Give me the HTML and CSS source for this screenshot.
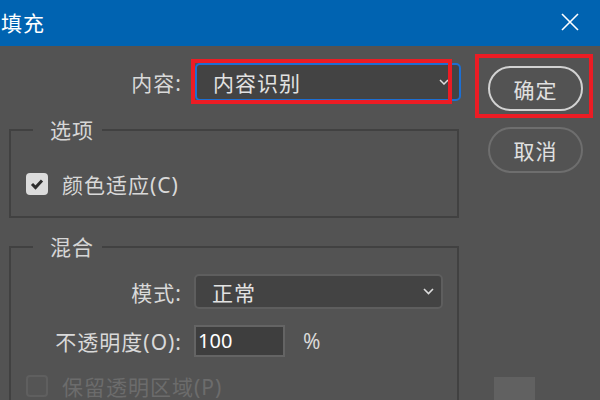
FILE: index.html
```html
<!DOCTYPE html>
<html lang="zh-CN">
<head>
    <meta charset="UTF-8">
    <title>填充</title>
    <link rel="stylesheet" href="styles.css">
</head>
<body>
    <header class="titlebar">
        <h1>填充</h1>
        <svg class="close" width="18" height="18" viewBox="0 0 18 18">
            <path d="M1 1 L17 17 M17 1 L1 17" stroke="#fff" stroke-width="1.6" fill="none"/>
        </svg>
    </header>

    <div class="dialog">
        <div class="left">
            <div class="row top-row">
                <span class="label">内容:</span>
                <div class="select select-active">
                    <span>内容识别</span>
                    <svg class="chevron" width="10" height="6" viewBox="0 0 10 6">
                        <path d="M1 1 L5 5 L9 1" stroke="#ddd" stroke-width="1.5" fill="none"/>
                    </svg>
                    <div class="mark"></div>
                </div>
            </div>

            <fieldset class="group">
                <legend>选项</legend>
                <label class="check-row">
                    <span class="checkbox">
                        <svg width="14" height="12" viewBox="0 0 14 12">
                            <path d="M2 6 L5.5 9.5 L12 2.5" stroke="#2e2e2e" stroke-width="3" fill="none"/>
                        </svg>
                    </span>
                    颜色适应(C)
                </label>
            </fieldset>

            <fieldset class="group blend">
                <legend>混合</legend>
                <div class="row">
                    <span class="label">模式:</span>
                    <div class="select select-mode">
                        <span>正常</span>
                        <svg class="chevron" width="11" height="7" viewBox="0 0 11 7">
                            <path d="M1 1 L5.5 5.5 L10 1" stroke="#ddd" stroke-width="1.6" fill="none"/>
                        </svg>
                    </div>
                </div>
                <div class="row opacity-row">
                    <span class="label">不透明度(O):</span>
                    <div class="input">100</div>
                    <span class="unit">%</span>
                </div>
                <label class="check-row disabled">
                    <span class="checkbox off"></span>
                    保留透明区域(P)
                </label>
            </fieldset>
        </div>

        <div class="right">
            <button class="btn btn-ok">确定<span class="mark"></span></button>
            <button class="btn btn-cancel">取消</button>
            <div class="swatch"></div>
        </div>
    </div>
</body>
</html>
```

FILE: styles.css
```css
body {
    margin: 0;
    padding: 0;
    background-color: #535353;
    font-family: "Noto Sans", "Noto Sans CJK SC", sans-serif;
    font-size: 21px;
    letter-spacing: 1px;
    color: #d9d9d9;
    overflow: hidden;
}

.titlebar {
    height: 46px;
    background-color: #0063b1;
    display: flex;
    align-items: center;
    justify-content: space-between;
    padding: 0 21px 0 1px;
}
.titlebar h1 {
    margin: 0 0 3px 0;
    font-size: 21px;
    font-weight: normal;
    color: #fff;
}
.close {
    margin-bottom: 3px;
}

.dialog {
    display: flex;
    gap: 27px;
    padding-left: 9px;
}
.left {
    width: 452px;
}
.right {
    width: 95px;
    padding-top: 20px;
    display: flex;
    flex-direction: column;
}

.row {
    display: flex;
    align-items: center;
}
.top-row {
    margin-top: 17px;
}
.top-row .label {
    width: 173px;
    margin-right: 13px;
}
.label {
    text-align: right;
    white-space: nowrap;
}

.select {
    position: relative;
    box-sizing: border-box;
    display: flex;
    align-items: center;
    background-color: #434343;
    border-radius: 5px;
    padding-left: 16px;
}
.select span {
    flex: 1;
    color: #e2e2e2;
}
.select-active {
    width: 266px;
    height: 38px;
    border: 2px solid #1c6fd3;
}
.select-active .chevron {
    margin-right: 10px;
}
.select-mode {
    width: 249px;
    height: 35px;
    border: 2px solid #5e5e5e;
}
.select-mode .chevron {
    margin-right: 7px;
}

.mark {
    position: absolute;
    box-sizing: border-box;
    border: 4px solid #ec1c24;
}
.select .mark {
    left: -6px;
    top: -6px;
    width: 261px;
    height: 45px;
}

.group {
    margin: 15px 0 0 0;
    padding: 26px 0 18px 15px;
    width: 450px;
    box-sizing: border-box;
    border: 2px solid #414141;
    min-width: 0;
}
.group legend {
    margin-left: 7px;
    padding: 0 8px 0 17px;
    line-height: 28px;
    color: #d6d6d6;
}
.blend {
    padding-top: 13px;
    border-bottom: none;
}
.blend .label {
    width: 156px;
    margin-right: 12px;
}

.check-row {
    display: flex;
    align-items: center;
    height: 28px;
    gap: 14px;
}
.checkbox {
    width: 22px;
    height: 22px;
    border-radius: 4px;
    background-color: #dcdcdc;
    display: flex;
    align-items: center;
    justify-content: center;
}
.checkbox.off {
    box-sizing: border-box;
    background-color: #555;
    border: 2px solid #5f5f5f;
}
.disabled {
    color: #6c6c6c;
    margin-top: 15px;
}

.opacity-row {
    margin-top: 16px;
}
.input {
    box-sizing: border-box;
    width: 91px;
    height: 32px;
    background-color: #3e3e3e;
    border: 2px solid #646464;
    color: #fff;
    font-size: 20px;
    letter-spacing: 0;
    line-height: 28px;
    padding-left: 2px;
}
.unit {
    margin-left: 18px;
}

.btn {
    position: relative;
    box-sizing: border-box;
    width: 95px;
    background: none;
    border-radius: 24px;
    color: #e0e0e0;
    font-family: inherit;
    font-size: 21px;
    letter-spacing: 1px;
    padding: 0;
}
.btn-ok {
    height: 45px;
    border: 2px solid #d2d2d2;
}
.btn-ok .mark {
    left: -15px;
    top: -14px;
    width: 118px;
    height: 64px;
}
.btn-cancel {
    height: 46px;
    margin-top: 16px;
    border: 2px solid #6e6e6e;
}
.swatch {
    width: 41px;
    height: 30px;
    margin: 204px 0 0 6px;
    background-color: #616161;
}
```
